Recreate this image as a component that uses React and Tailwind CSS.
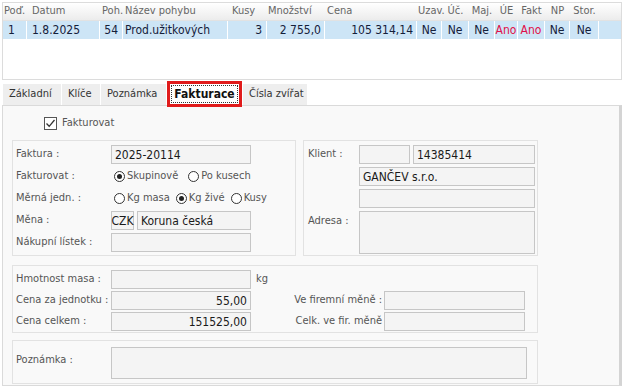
import React from 'react';

const FONT = { fontFamily: '"DejaVu Sans Condensed", "Liberation Sans", sans-serif' };

const columns = [
  { key: 'por', title: 'Poď.', w: 'w-[24px]', head: 'pl-[1px]', cell: 'pl-[5px]', value: '1' },
  { key: 'datum', title: 'Datum', w: 'w-[73px]', head: 'pl-[5px]', cell: 'pl-[5px]', value: '1.8.2025' },
  { key: 'poh', title: 'Poh.', w: 'w-[23px]', head: 'pl-[2px]', cell: 'justify-end pr-[4px]', value: '54' },
  { key: 'nazev', title: 'Název pohybu', w: 'w-[105px]', head: 'pl-[2px]', cell: 'pl-[2px]', value: 'Prod.užitkových' },
  { key: 'kusy', title: 'Kusy', w: 'w-[39px]', head: 'pl-[4px]', cell: 'justify-end pr-[4px]', value: '3' },
  { key: 'mnozstvi', title: 'Množství', w: 'w-[58px]', head: 'pl-[1px]', cell: 'justify-end pr-[3px]', value: '2 755,0' },
  { key: 'cena', title: 'Cena', w: 'w-[92px]', head: 'pl-[2px]', cell: 'justify-end pr-[3px]', value: '105 314,14' },
  { key: 'uzav', title: 'Uzav.', w: 'w-[25px]', head: 'pl-[1px]', cell: 'justify-center', value: 'Ne' },
  { key: 'uc', title: 'Úč.', w: 'w-[27px]', head: 'justify-center', cell: 'justify-center', value: 'Ne' },
  { key: 'maj', title: 'Maj.', w: 'w-[26px]', head: 'justify-center', cell: 'justify-center', value: 'Ne' },
  { key: 'ue', title: 'ÚE', w: 'w-[23px]', head: 'justify-center', cell: 'justify-center', value: 'Ano', red: true },
  { key: 'fakt', title: 'Fakt', w: 'w-[27px]', head: 'justify-center', cell: 'justify-center', value: 'Ano', red: true },
  { key: 'np', title: 'NP', w: 'w-[25px]', head: 'justify-center', cell: 'justify-center', value: 'Ne' },
  { key: 'stor', title: 'Stor.', w: 'w-[29px]', head: 'justify-center', cell: 'justify-center', value: 'Ne' },
];

const tabs = [
  { label: 'Základní', w: 'w-[58px]' },
  { label: 'Klíče', w: 'w-[38px]' },
  { label: 'Poznámka', w: 'w-[65px]' },
  { label: 'Fakturace', w: 'w-[75px]', active: true },
  { label: 'Čísla zvířat', w: 'w-[64px]' },
];

function Field({ className = '', children, right }) {
  return (
    <div
      className={`h-[19px] border border-[#c6c6c6] bg-[#f4f4f4] flex items-center px-[3px] text-[12px] text-[#1a1a1a] ${right ? 'justify-end' : ''} ${className}`}
    >
      {children}
    </div>
  );
}

function Radio({ checked, label }) {
  return (
    <div className="flex items-center gap-[2px] text-[11px] text-[#555]">
      <span className="w-[11px] h-[11px] rounded-full border border-[#333] bg-white flex items-center justify-center">
        {checked && <span className="w-[5px] h-[5px] rounded-full bg-[#222]" />}
      </span>
      <span>{label}</span>
    </div>
  );
}

function Label({ children, w = 'w-[95px]' }) {
  return <div className={`${w} shrink-0 text-[11px] text-[#555]`}>{children}</div>;
}

export default function App() {
  return (
    <div className="w-[624px] h-[386px] bg-white overflow-hidden" style={FONT}>
      {/* grid */}
      <div className="mx-[2px] mt-[2px] h-[78px] border border-[#dcdcdc] bg-white">
        <div className="h-[18px] flex bg-gradient-to-b from-white to-[#ececec] border-b border-[#e2e2e2]">
          {columns.map((c) => (
            <div key={c.key} className={`${c.w} shrink-0 flex items-center text-[11px] text-[#666] whitespace-nowrap ${c.head}`}>
              {c.title}
            </div>
          ))}
        </div>
        <div className="h-[18px] flex bg-[#cde5f6]">
          {columns.map((c) => (
            <div
              key={c.key}
              className={`${c.w} shrink-0 flex items-center text-[12px] whitespace-nowrap border-r border-white ${c.cell} ${c.red ? 'text-[#e0104a]' : 'text-[#14203a]'}`}
            >
              {c.value}
            </div>
          ))}
        </div>
      </div>

      {/* tabs */}
      <div className="relative z-10 mx-[2px] mt-[1px] h-[24px] flex items-end pl-[1px] gap-[1px]">
        {tabs.map((t) =>
          t.active ? (
            <div key={t.label} className={`${t.w} h-[26px] -mb-[2px] border-[3px] border-[#e01b1b] bg-white p-[1px] shrink-0`}>
              <div className="h-full border border-dotted border-[#333] flex items-center justify-center text-[12px] font-bold text-[#111]">
                {t.label}
              </div>
            </div>
          ) : (
            <div key={t.label} className={`${t.w} h-[21px] bg-[#eeeeee] flex items-center pl-[6px] text-[11px] text-[#333] shrink-0`}>
              {t.label}
            </div>
          )
        )}
      </div>

      {/* panel */}
      <div className="mx-[2px] h-[281px] border border-[#dadada] border-r-[3px] border-r-[#d4d4d4] bg-[#f9f9f9] pl-[9px]">
        <div className="h-[34px] flex items-center pl-[32px] gap-[5px]">
          <span className="w-[13px] h-[13px] border border-[#555] bg-white flex items-center justify-center">
            <svg width="11" height="11" viewBox="0 0 11 11">
              <path d="M1.5 5.5 L4.2 8.3 L9.5 2" fill="none" stroke="#333" strokeWidth="1.3" />
            </svg>
          </span>
          <span className="text-[11px] text-[#555]">Fakturovat</span>
        </div>

        <div className="flex gap-[7px]">
          {/* left group */}
          <div className="w-[284px] h-[116px] border border-[#e2e2e2] pt-[4px] pl-[3px] flex flex-col gap-[3px]">
            <div className="flex items-center">
              <Label>Faktura :</Label>
              <Field className="w-[140px]">2025-20114</Field>
            </div>
            <div className="h-[19px] flex items-center">
              <Label>Fakturovat :</Label>
              <div className="flex items-center gap-[10px] pl-[3px]">
                <Radio checked label="Skupinově" />
                <Radio label="Po kusech" />
              </div>
            </div>
            <div className="h-[19px] flex items-center">
              <Label>Měrná jedn. :</Label>
              <div className="flex items-center gap-[6px] pl-[3px]">
                <Radio label="Kg masa" />
                <Radio checked label="Kg živé" />
                <Radio label="Kusy" />
              </div>
            </div>
            <div className="flex items-center">
              <Label>Měna :</Label>
              <Field className="w-[23px] justify-center !px-0">CZK</Field>
              <Field className="w-[114px] ml-[3px]">Koruna česká</Field>
            </div>
            <div className="flex items-center">
              <Label>Nákupní lístek :</Label>
              <Field className="w-[140px]" />
            </div>
          </div>

          {/* right group */}
          <div className="w-[235px] h-[116px] border border-[#e2e2e2] pt-[4px] pl-[4px] flex flex-col gap-[3px]">
            <div className="flex items-center">
              <Label w="w-[51px]">Klient :</Label>
              <Field className="w-[51px]" />
              <Field className="w-[122px] ml-[3px]">14385414</Field>
            </div>
            <div className="flex items-center">
              <div className="w-[51px] shrink-0" />
              <Field className="w-[176px]">GANČEV s.r.o.</Field>
            </div>
            <div className="flex items-center">
              <div className="w-[51px] shrink-0" />
              <Field className="w-[176px]" />
            </div>
            <div className="flex items-start">
              <div className="w-[51px] shrink-0 pt-[2px] text-[11px] text-[#555]">Adresa :</div>
              <Field className="w-[176px] !h-[43px]" />
            </div>
          </div>
        </div>

        {/* prices */}
        <div className="mt-[9px] w-[526px] h-[68px] border border-[#e2e2e2] pt-[4px] pl-[3px] flex flex-col gap-[2px]">
          <div className="flex items-center">
            <Label>Hmotnost masa :</Label>
            <Field className="w-[140px]" />
            <span className="ml-[5px] text-[11px] text-[#555]">kg</span>
          </div>
          <div className="flex items-center">
            <Label>Cena za jednotku :</Label>
            <Field className="w-[140px]" right>55,00</Field>
            <div className="w-[133px] text-right pr-[2px] text-[11px] text-[#555]">Ve firemní měně :</div>
            <Field className="w-[141px]" />
          </div>
          <div className="flex items-center">
            <Label>Cena celkem :</Label>
            <Field className="w-[140px]" right>151525,00</Field>
            <div className="w-[133px] text-right pr-[2px] text-[11px] text-[#555]">Celk. ve fir. měně</div>
            <Field className="w-[141px]" />
          </div>
        </div>

        {/* note */}
        <div className="mt-[7px] w-[526px] h-[44px] border border-[#e2e2e2] pt-[6px] pl-[3px] flex items-start">
          <div className="w-[95px] shrink-0 pt-[5px] text-[11px] text-[#555]">Poznámka :</div>
          <Field className="w-[416px] !h-[32px]" />
        </div>
      </div>
    </div>
  );
}
